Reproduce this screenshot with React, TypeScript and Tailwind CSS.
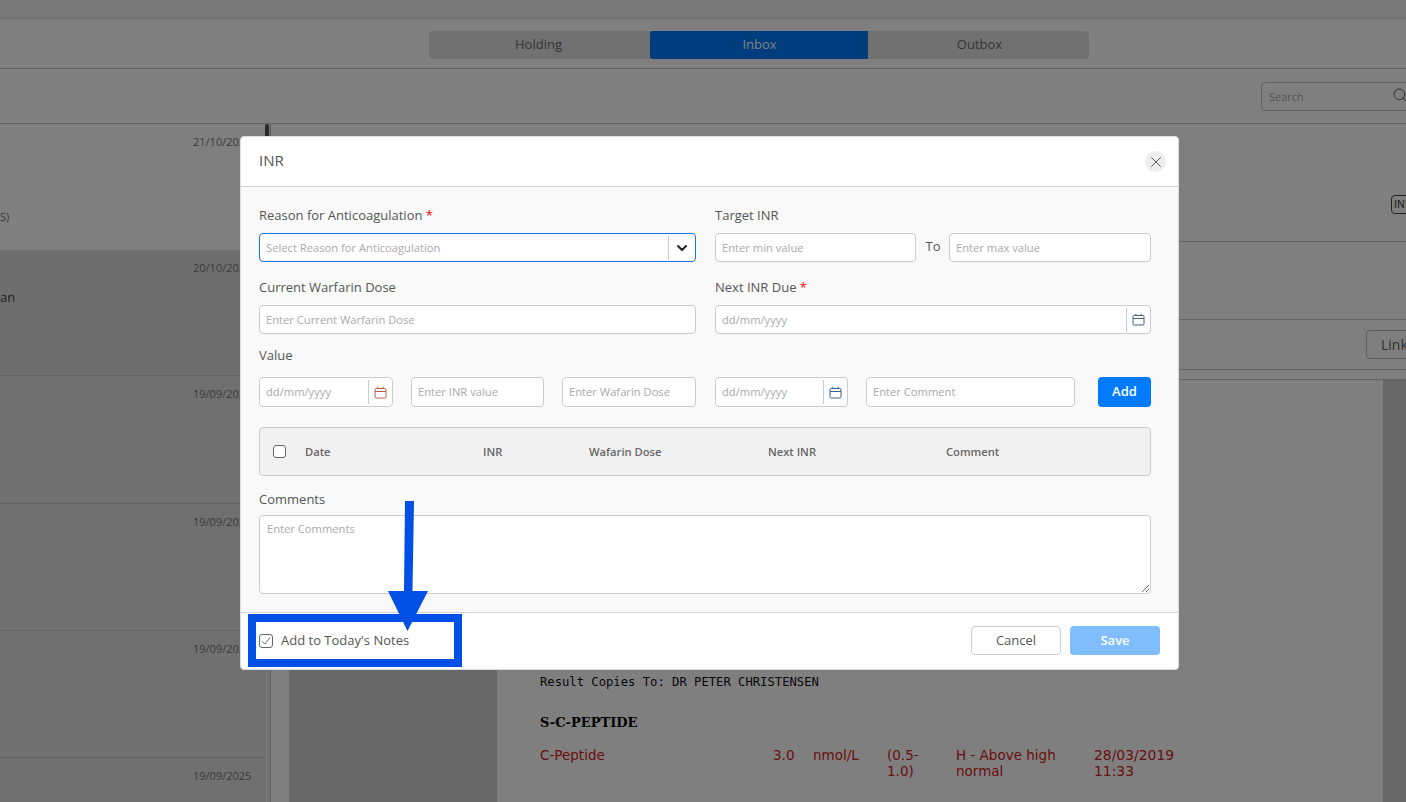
import React from "react";
import { ChevronDown, Search, X } from "lucide-react";

function Cal({ color }: { color: string }) {
  return (
    <svg width="13" height="13" viewBox="0 0 13 13" fill="none" stroke={color} strokeWidth="1">
      <rect x="1" y="2.5" width="11" height="9.5" rx="1.2" />
      <path d="M1 5.5H12M3.8 0.8V3M9.2 0.8V3" />
    </svg>
  );
}

const ctl =
  "h-full w-full rounded-[4px] border border-[#ccc] bg-white px-[6px] text-[11.2px] text-[#555] outline-none placeholder:text-[#a9a9a9]";
const ctlRow =
  "h-full w-full rounded-[4px] border border-[#ccc] bg-white px-[6px] pb-[2px] text-[11.2px] text-[#555] outline-none placeholder:text-[#a9a9a9]";

function Label({ children, req }: { children: React.ReactNode; req?: boolean }) {
  return (
    <div className="h-[18px] text-[13px] leading-[18px] text-[#555]">
      {children}
      {req && <span className="text-[#f00]"> *</span>}
    </div>
  );
}

function DateField({ color, raised }: { color: string; raised?: boolean }) {
  return (
    <div className="flex h-full w-full items-center rounded-[4px] border border-[#ccc] bg-white">
      <input
        placeholder="dd/mm/yyyy"
        className={
          raised
            ? "h-full min-w-0 flex-1 bg-transparent px-[6px] pb-[2px] text-[11.2px] outline-none placeholder:text-[#a9a9a9]"
            : "h-full min-w-0 flex-1 bg-transparent px-[6px] text-[11.2px] outline-none placeholder:text-[#a9a9a9]"
        }
      />
      <div className="flex h-[24px] w-[24px] shrink-0 items-center justify-center border-l border-[#ccc]">
        <Cal color={color} />
      </div>
    </div>
  );
}

function ListRow({ date, cls, children }: { date: string; cls: string; children?: React.ReactNode }) {
  return (
    <div className={`${cls} shrink-0 border-b pt-[10px] text-[11px] leading-[16px] text-[#777]`}>
      <div className="pl-[193px]">{date}</div>
      {children}
    </div>
  );
}

function Background() {
  return (
    <div className="flex h-[802px] w-[1406px] flex-col overflow-hidden bg-white">
      <div className="h-[19px] shrink-0 border-b border-[#d8d8d8] bg-[#f2f2f2]" />
      <div className="flex h-[50px] shrink-0 justify-center border-b border-[#c8c8c8] pl-[111px] pt-[12px]">
        <div className="flex h-[28px] w-[660px] overflow-hidden rounded-[4px] bg-[#e2e2e2] text-[13px] font-medium leading-[26px] text-[#6b6b6b]">
          <div className="w-[220px] text-center">Holding</div>
          <div className="ml-[1px] w-[218px] rounded-l-[3px] bg-[#007bff] pl-[2px] text-center text-white">Inbox</div>
          <div className="ml-[1px] w-[220px] pl-[2px] text-center">Outbox</div>
        </div>
      </div>
      <div className="h-[55px] shrink-0 border-b border-[#c8c8c8] pl-[1261px] pt-[13px]">
        <div className="flex h-[29px] w-[170px] items-center rounded-[4px] border border-[#c8c8c8] pl-[7px] text-[11px] text-[#a9a9a9]">
          <span className="pt-[2px]">Search</span>
          <Search size={16} strokeWidth={1.4} className="mb-[3px] ml-[88px] text-[#555]" />
        </div>
      </div>
      <div className="flex min-h-0 flex-1">
        <div className="w-[265px] shrink-0 overflow-hidden">
          <ListRow date="21/10/2025" cls="h-[126px] bg-white border-white">
            <div className="mt-[59px] text-[11px] leading-[16px]">S)</div>
          </ListRow>
          <ListRow date="20/10/2025" cls="h-[126px] bg-[#dcdcdc] border-[#c4c4c4]">
            <div className="mt-[12px] text-[13px] leading-[18px] text-[#444]">an</div>
          </ListRow>
          <ListRow date="19/09/2025" cls="h-[128px] bg-[#e0e0e0] border-[#c4c4c4]" />
          <ListRow date="19/09/2025" cls="h-[127px] bg-[#e0e0e0] border-[#c4c4c4]" />
          <ListRow date="19/09/2025" cls="h-[127px] bg-[#e0e0e0] border-[#c4c4c4]" />
          <ListRow date="19/09/2025" cls="h-[60px] bg-[#e0e0e0] border-[#c4c4c4]" />
        </div>
        <div className="w-[6px] shrink-0 border-r border-[#c4c4c4] bg-[#e8e8e8]">
          <div className="h-[14px] w-[4px] rounded-[2px] bg-[#555]" />
        </div>
        <div className="flex min-w-0 flex-1 flex-col">
          <div className="h-[118px] shrink-0 border-b border-[#c8c8c8] pl-[1120px] pt-[71px]">
            <div className="h-[19px] w-[40px] rounded-[4px] border border-[#444] pl-[2px] text-[10px] font-semibold leading-[17px] text-[#555]">INR</div>
          </div>
          <div className="h-[78px] shrink-0 border-b border-[#c8c8c8]" />
          <div className="h-[50px] shrink-0 border-b border-[#c8c8c8] pl-[1095px] pt-[10px]">
            <div className="h-[29px] w-[70px] rounded-[4px] border border-[#bbb] pl-[14px] text-[14px] leading-[27px] text-[#666]">Link</div>
          </div>
          <div className="h-[10px] shrink-0 border-b border-[#c8c8c8]" />
          <div className="flex min-h-0 flex-1">
            <div className="w-[18px] shrink-0 bg-white" />
            <div className="w-[208px] shrink-0 bg-[#d0d0d0]" />
            <div className="w-[886px] shrink-0 bg-white pl-[43px] pt-[294px]">
              <div className="font-['DejaVu_Sans_Mono',monospace] text-[12.2px] leading-[16px] text-[#111]">Result Copies To: DR PETER CHRISTENSEN</div>
              <div className="mt-[25px] font-['DejaVu_Serif',serif] text-[13px] font-bold leading-[16px] text-black">S-C-PEPTIDE</div>
              <div className="mt-[16px] flex font-['DejaVu_Sans',sans-serif] text-[13.5px] leading-[16px] text-[#d32020]">
                <div className="w-[233px]">C-Peptide</div>
                <div className="w-[40px]">3.0</div>
                <div className="w-[74px]">nmol/L</div>
                <div className="w-[69px]">(0.5-<br />1.0)</div>
                <div className="w-[138px]">H - Above high<br />normal</div>
                <div className="text-[13.9px]">28/03/2019<br />11:33</div>
              </div>
            </div>
            <div className="flex-1 bg-[#cfcfcf]" />
          </div>
        </div>
      </div>
    </div>
  );
}

function Modal() {
  return (
    <div className="flex h-[534px] w-[939px] flex-col overflow-hidden rounded-[4px] border border-[#ddd] bg-white">
      <div className="flex h-[50px] shrink-0 items-center justify-between border-b border-[#d4d4d4] pl-[18px] pr-[12px]">
        <div className="pb-[2px] text-[15px] text-[#555]">INR</div>
        <div className="flex h-[21px] w-[21px] items-center justify-center rounded-full bg-[#eee] text-[#555]">
          <X size={18} strokeWidth={1.3} />
        </div>
      </div>
      <div className="flex min-h-0 flex-1 flex-col bg-[#f9f9f9] pl-[18px] pr-[27px] pt-[19px]">
        <div className="grid grid-cols-[437px_436px] gap-x-[19px]">
          <div>
            <Label req>Reason for Anticoagulation</Label>
            <div className="mt-[9px] flex h-[29px] items-center rounded-[4px] border border-[#1a73e8] bg-white">
              <span className="flex-1 px-[6px] pt-[1px] text-[11.2px] text-[#a9a9a9]">Select Reason for Anticoagulation</span>
              <div className="flex h-[24px] w-[27px] items-center justify-center border-l border-[#ccc]">
                <ChevronDown size={16} strokeWidth={3} className="text-[#222]" />
              </div>
            </div>
          </div>
          <div>
            <Label>Target INR</Label>
            <div className="mt-[9px] flex h-[29px] items-center">
              <div className="h-full w-[201px]"><input placeholder="Enter min value" className={ctl} /></div>
              <div className="w-[33px] pb-[2px] pl-[1px] text-center text-[13px] text-[#555]">To</div>
              <div className="h-full w-[202px]"><input placeholder="Enter max value" className={ctl} /></div>
            </div>
          </div>
          <div className="mt-[16px]">
            <Label>Current Warfarin Dose</Label>
            <div className="mt-[9px] h-[29px]"><input placeholder="Enter Current Warfarin Dose" className={ctl} /></div>
          </div>
          <div className="mt-[16px]">
            <Label req>Next INR Due</Label>
            <div className="mt-[9px] h-[29px]"><DateField color="#4a5a70" /></div>
          </div>
        </div>
        <div className="mt-[12px]"><Label>Value</Label></div>
        <div className="mt-[13px] flex h-[30px]">
          <div className="w-[134px]"><DateField color="#b0604c" raised /></div>
          <div className="ml-[18px] w-[133px]"><input placeholder="Enter INR value" className={ctlRow} /></div>
          <div className="ml-[18px] w-[134px]"><input placeholder="Enter Wafarin Dose" className={ctlRow} /></div>
          <div className="ml-[19px] w-[133px]"><DateField color="#3f5f8a" raised /></div>
          <div className="ml-[18px] w-[209px]"><input placeholder="Enter Comment" className={ctlRow} /></div>
          <div className="ml-[23px] w-[53px] rounded-[4px] bg-[#007bff] text-center text-[13px] font-semibold leading-[29px] text-white">Add</div>
        </div>
        <div className="mt-[20px] flex h-[49px] shrink-0 items-center rounded-[4px] border border-[#ccc] bg-[#f1f1f1] text-[11.2px] font-semibold leading-[16px] text-[#666]">
          <div className="ml-[13px] h-[13px] w-[13px] rounded-[3px] border border-[#666] bg-white" />
          <div className="ml-[19px] w-[178px] pt-[1px]">Date</div>
          <div className="w-[106px] pt-[1px]">INR</div>
          <div className="w-[179px] pt-[1px]">Wafarin Dose</div>
          <div className="w-[178px] pt-[1px]">Next INR</div>
          <div className="pt-[1px]">Comment</div>
        </div>
        <div className="mt-[14px]"><Label>Comments</Label></div>
        <textarea
          placeholder="Enter Comments"
          className="mt-[7px] block h-[79px] w-full shrink-0 rounded-[4px] border border-[#ccc] bg-white px-[7px] py-[5px] text-[11.2px] leading-[16px] outline-none placeholder:text-[#a9a9a9]"
        />
      </div>
      <div className="flex h-[57px] shrink-0 items-center border-t border-[#d4d4d4] pl-[18px] pr-[18px]">
        <div className="flex h-[14px] w-[14px] items-center justify-center rounded-[3px] border border-[#666]">
          <svg width="10" height="10" viewBox="0 0 10 10" fill="none" stroke="#666" strokeWidth="1"><path d="M1 5.2L3.8 8L9 1.6" /></svg>
        </div>
        <div className="ml-[8px] text-[13px] text-[#555]">Add to Today's Notes</div>
        <div className="flex-1" />
        <div className="mb-[2px] h-[29px] w-[90px] rounded-[4px] border border-[#ccc] text-center text-[13px] leading-[27px] text-[#555]">Cancel</div>
        <div className="mb-[2px] ml-[9px] h-[29px] w-[90px] rounded-[4px] bg-[#80bdff] text-center text-[13px] font-semibold leading-[29px] text-white">Save</div>
      </div>
    </div>
  );
}

export default function App() {
  return (
    <div className="relative h-[802px] w-[1406px] overflow-hidden font-['Open_Sans',sans-serif]">
      <Background />
      <div className="absolute inset-0 bg-black/50 pl-[240px] pt-[136px]">
        <Modal />
      </div>
      <div className="absolute left-[248px] top-[614px] h-[53px] w-[214px] border-[8px] border-[#0050e6]" />
      <svg className="absolute left-[380px] top-[495px]" width="56" height="140" viewBox="380 495 56 140">
        <path d="M405 501H414L412.5 591H428L407.5 631L388 591H404Z" fill="#0050e6" />
      </svg>
    </div>
  );
}
